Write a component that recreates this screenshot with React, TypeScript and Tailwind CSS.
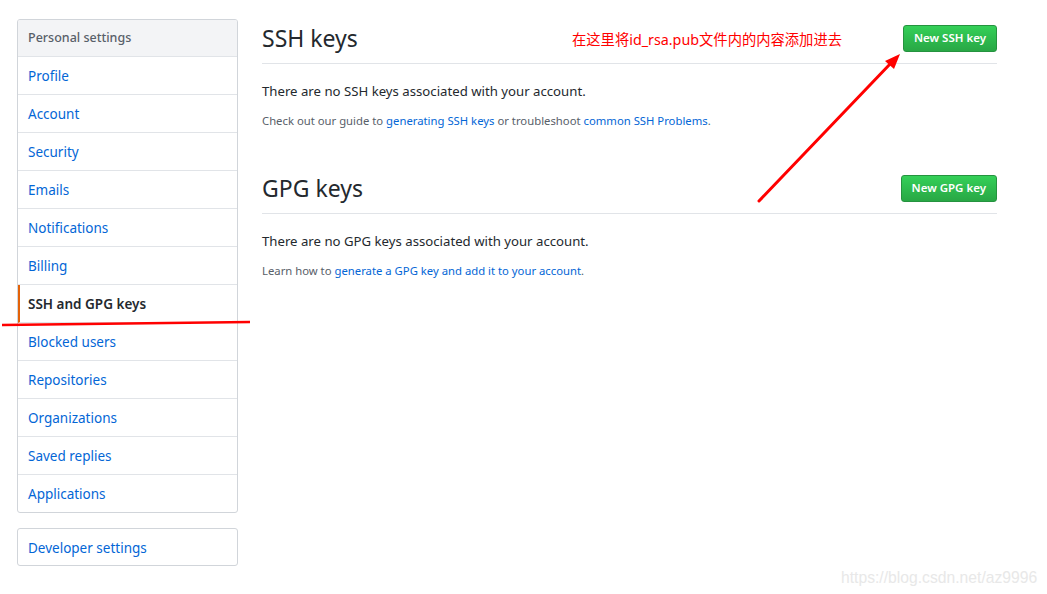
import React from "react"

const items = [
  "Profile",
  "Account",
  "Security",
  "Emails",
  "Notifications",
  "Billing",
  "SSH and GPG keys",
  "Blocked users",
  "Repositories",
  "Organizations",
  "Saved replies",
  "Applications",
]

const font = { fontFamily: '"Noto Sans", "Noto Sans CJK SC", sans-serif' }

function Button({ label }: { label: string }) {
  return (
    <button className="h-[27px] px-[10px] rounded-[3px] border border-[#25933f] bg-gradient-to-b from-[#34d058] to-[#28a745] text-white text-[11.5px] font-semibold leading-none">
      {label}
    </button>
  )
}

export default function App() {
  return (
    <div className="relative w-[1047px] h-[594px] bg-white text-[#24292e] overflow-hidden" style={font}>
      <div className="flex pt-[19px] pl-[17px]">
        {/* Sidebar */}
        <div className="w-[221px] flex flex-col gap-[15px]">
          <nav className="border border-[#d1d5da] rounded-[3px] overflow-hidden">
            <div className="h-[37px] bg-[#f3f4f6] border-b border-[#e1e4e8] px-[10px] pt-[1px] flex items-center text-[12.5px] font-medium text-[#586069]">
              Personal settings
            </div>
            {items.map((item, i) => {
              const active = item === "SSH and GPG keys"
              const last = i === items.length - 1
              return (
                <div
                  key={item}
                  className={
                    "flex items-center px-[10px] pt-[2px] text-[13.5px] " +
                    (last ? "h-[37px] " : "h-[38px] border-b border-[#e1e4e8] ") +
                    (active ? "border-l-2 border-l-[#e36209] pl-[8px] text-[#24292e] font-semibold" : "text-[#0366d6]")
                  }
                >
                  {item}
                </div>
              )
            })}
          </nav>
          <div className="h-[38px] border border-[#d1d5da] rounded-[3px] flex items-center px-[10px] pt-[2px] text-[13.5px] text-[#0366d6]">
            Developer settings
          </div>
        </div>

        {/* Main */}
        <div className="ml-[24px] w-[735px] pt-[4px]">
          <div className="flex items-center justify-between border-b border-[#e1e4e8] pb-[10px]">
            <h2 className="text-[23px] leading-[30px]">SSH keys</h2>
            <Button label="New SSH key" />
          </div>
          <p className="mt-[16px] text-[13.2px] leading-[22px]">There are no SSH keys associated with your account.</p>
          <p className="mt-[10px] text-[11.3px] leading-[18px] text-[#586069]">
            Check out our guide to <span className="text-[#0366d6]">generating SSH keys</span> or troubleshoot{" "}
            <span className="text-[#0366d6]">common SSH Problems</span>.
          </p>

          <div className="mt-[43px] flex items-center justify-between border-b border-[#e1e4e8] pb-[10px]">
            <h2 className="text-[23px] leading-[30px]">GPG keys</h2>
            <Button label="New GPG key" />
          </div>
          <p className="mt-[16px] text-[13.2px] leading-[22px]">There are no GPG keys associated with your account.</p>
          <p className="mt-[10px] text-[11.3px] leading-[18px] text-[#586069]">
            Learn how to <span className="text-[#0366d6]">generate a GPG key and add it to your account</span>.
          </p>
        </div>
      </div>

      {/* Annotations */}
      <div className="absolute left-[572px] top-[30px] text-[14.3px] text-[#ff0000] leading-[20px]">
        在这里将id_rsa.pub文件内的内容添加进去
      </div>
      <svg className="absolute inset-0 pointer-events-none" width="1047" height="594">
        <line x1="2" y1="325" x2="250" y2="322" stroke="#ff0000" strokeWidth="2.5" />
        <line x1="759" y1="201" x2="891" y2="63" stroke="#ff0000" strokeWidth="3" strokeLinecap="round" />
        <polygon points="900,54 894,69 885,61" fill="#ff0000" />
      </svg>
      <div className="absolute left-[841px] top-[566px] text-[15.7px] text-[#e8e8e8]" style={{ fontFamily: '"Liberation Sans", sans-serif' }}>
        https://blog.csdn.net/az9996
      </div>
    </div>
  )
}
